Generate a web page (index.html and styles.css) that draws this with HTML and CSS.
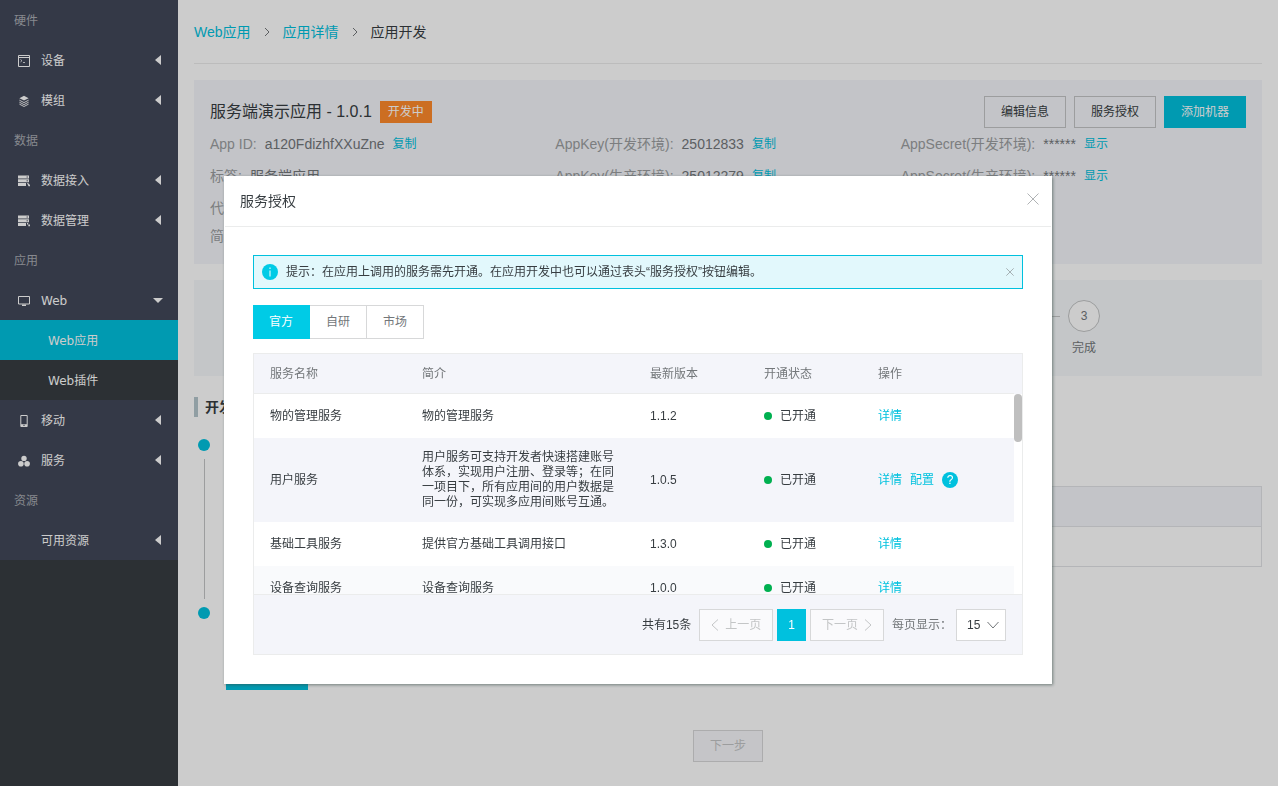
FILE: index.html
```html
<!DOCTYPE html>
<html lang="zh-CN">
<head>
    <meta charset="UTF-8">
    <meta name="viewport" content="width=device-width, initial-scale=1.0">
    <title>服务授权</title>
    <link rel="stylesheet" href="styles.css">
</head>
<body>
    <div class="layout">
        <!-- 左侧菜单 -->
        <nav class="sidebar">
            <div class="menu">
                <h2 class="menu-group">硬件</h2>
                <a href="#" class="menu-item">
                    <svg class="menu-icon" viewBox="0 0 12 12"><path d="M.5.5h11v11H.5zM.5 2.500h11" fill="none" stroke="#fff"/><path d="M2.500 4.500l1.500 1.200-1.500 1.200M5 7.500h2" fill="none" stroke="#fff" stroke-width=".8"/></svg>
                    <span>设备</span><i class="arrow"></i>
                </a>
                <a href="#" class="menu-item">
                    <svg class="menu-icon" viewBox="0 0 12 12"><path d="M6 .8l4.600 2.400L6 5.600 1.400 3.200z" fill="#fff"/><path d="M1.400 5.200L6 7.600l4.600-2.400M1.400 7.200L6 9.600l4.600-2.400M1.400 9.100L6 11.500l4.600-2.400" fill="none" stroke="#fff" stroke-width=".9"/></svg>
                    <span>模组</span><i class="arrow"></i>
                </a>
                <h2 class="menu-group">数据</h2>
                <a href="#" class="menu-item">
                    <svg class="menu-icon" viewBox="0 0 12 12"><path d="M0 .5h11v3H0zM0 4.300h11v3H0zM0 8h8v3H0zM9 8h1l2 2v1.300h-1.500z" fill="#fff"/><path d="M8.500 2h1.500M8.500 5.800h1.500" stroke="#424859" stroke-width=".8"/></svg>
                    <span>数据接入</span><i class="arrow"></i>
                </a>
                <a href="#" class="menu-item">
                    <svg class="menu-icon" viewBox="0 0 12 12"><path d="M0 .5h11v3H0zM0 4.300h11v3H0zM0 8h8v3H0zM9 8h1.200v1.500H9zM10.300 9.500H12v1.800h-1.700z" fill="#fff"/><path d="M8.500 2h1.500M8.500 5.800h1.500" stroke="#424859" stroke-width=".8"/></svg>
                    <span>数据管理</span><i class="arrow"></i>
                </a>
                <h2 class="menu-group">应用</h2>
                <a href="#" class="menu-item">
                    <svg class="menu-icon" viewBox="0 0 12 12"><path d="M.5 1.500h11v7.500H.5z" fill="none" stroke="#fff"/><path d="M4 9.500h4v1.500H4z" fill="#fff"/></svg>
                    <span>Web</span><i class="arrow arrow-down"></i>
                </a>
                <a href="#" class="menu-sub active">Web应用</a>
                <a href="#" class="menu-sub">Web插件</a>
                <a href="#" class="menu-item">
                    <svg class="menu-icon" viewBox="0 0 12 12"><path d="M2.800.5h6.400v11H2.800z" fill="none" stroke="#fff"/><path d="M3 9.200h6v2.300H3z" fill="#fff"/><path d="M5.300 10.300h1.400" stroke="#424859"/></svg>
                    <span>移动</span><i class="arrow"></i>
                </a>
                <a href="#" class="menu-item">
                    <svg class="menu-icon" viewBox="0 0 12 12" fill="#fff"><circle cx="6" cy="3.400" r="2.700"/><circle cx="2.900" cy="8.700" r="2.800"/><circle cx="9.100" cy="8.700" r="2.800"/></svg>
                    <span>服务</span><i class="arrow"></i>
                </a>
                <h2 class="menu-group">资源</h2>
                <a href="#" class="menu-item">
                    <i class="menu-icon"></i>
                    <span>可用资源</span><i class="arrow"></i>
                </a>
            </div>
        </nav>

        <main class="main">
            <div class="breadcrumb">
                <a href="#">Web应用</a>
                <svg class="crumb-sep" viewBox="0 0 6 10"><path d="M1 1l4 4-4 4"/></svg>
                <a href="#">应用详情</a>
                <svg class="crumb-sep" viewBox="0 0 6 10"><path d="M1 1l4 4-4 4"/></svg>
                <span>应用开发</span>
            </div>

            <!-- 应用信息 -->
            <section class="info">
                <div class="info-head">
                    <h1>服务端演示应用 - 1.0.1</h1>
                    <span class="tag">开发中</span>
                    <div class="info-actions">
                        <button type="button" class="btn">编辑信息</button>
                        <button type="button" class="btn">服务授权</button>
                        <button type="button" class="btn btn-primary">添加机器</button>
                    </div>
                </div>
                <div class="info-grid">
                    <div class="info-cell"><span class="label">App ID:</span><span>a120FdizhfXXuZne</span><a href="#">复制</a></div>
                    <div class="info-cell"><span class="label">AppKey(开发环境):</span><span>25012833</span><a href="#">复制</a></div>
                    <div class="info-cell"><span class="label">AppSecret(开发环境):</span><span>******</span><a href="#">显示</a></div>
                    <div class="info-cell"><span class="label">标签:</span><span>服务端应用</span></div>
                    <div class="info-cell"><span class="label">AppKey(生产环境):</span><span>25012279</span><a href="#">复制</a></div>
                    <div class="info-cell"><span class="label">AppSecret(生产环境):</span><span>******</span><a href="#">显示</a></div>
                </div>
                <div class="info-cell"><span class="label">代</span></div>
                <div class="info-cell info-last"><span class="label">简</span></div>
            </section>

            <!-- 步骤条 -->
            <ol class="steps">
                <li class="step"><span class="step-num">1</span></li>
                <li class="step"><span class="step-num">2</span></li>
                <li class="step"><span class="step-num">3</span><span>完成</span></li>
            </ol>

            <h2 class="section-title">开发</h2>
            <ul class="timeline">
                <li class="timeline-item">
                    <div class="marker"><i class="dot"></i><i class="line"></i></div>
                    <div class="panel"><div class="panel-head"></div><div class="panel-body"></div></div>
                </li>
                <li class="timeline-item">
                    <div class="marker"><i class="dot"></i></div>
                    <button type="button" class="btn btn-primary timeline-btn" aria-label="添加"></button>
                </li>
            </ul>
            <div class="next"><button type="button" class="btn btn-disabled" disabled>下一步</button></div>
        </main>
    </div>

    <!-- 服务授权弹窗 -->
    <div class="mask">
        <div class="dialog" role="dialog" aria-labelledby="dialog-title">
            <div class="dialog-head">
                <h2 id="dialog-title">服务授权</h2>
                <button type="button" class="close" aria-label="关闭"><svg viewBox="0 0 12 12"><path d="M.5.5l11 11M11.500.5l-11 11"/></svg></button>
            </div>
            <div class="dialog-body">
                <div class="notice">
                    <svg class="notice-icon" viewBox="0 0 16 16"><circle cx="8" cy="8" r="8" fill="#00cbe6"/><path d="M8 6.500v6M8 3.500v1.500" stroke="#fff"/></svg>
                    <p>提示：在应用上调用的服务需先开通。在应用开发中也可以通过表头“服务授权”按钮编辑。</p>
                    <button type="button" class="close close-small" aria-label="关闭提示"><svg viewBox="0 0 12 12"><path d="M.5.5l11 11M11.500.5l-11 11"/></svg></button>
                </div>

                <div class="tabs">
                    <button type="button" class="tab selected">官方</button>
                    <button type="button" class="tab">自研</button>
                    <button type="button" class="tab">市场</button>
                </div>

                <div class="table-box">
                    <div class="table-scroll">
                        <table class="services">
                            <thead>
                                <tr>
                                    <th class="col-name">服务名称</th>
                                    <th class="col-desc">简介</th>
                                    <th class="col-version">最新版本</th>
                                    <th class="col-status">开通状态</th>
                                    <th class="col-action">操作</th>
                                </tr>
                            </thead>
                            <tbody>
                                <tr>
                                    <td>物的管理服务</td>
                                    <td>物的管理服务</td>
                                    <td>1.1.2</td>
                                    <td><span class="status">已开通</span></td>
                                    <td><a href="#">详情</a></td>
                                </tr>
                                <tr class="hover">
                                    <td>用户服务</td>
                                    <td>用户服务可支持开发者快速搭建账号体系，实现用户注册、登录等；在同一项目下，所有应用间的用户数据是同一份，可实现多应用间账号互通。</td>
                                    <td>1.0.5</td>
                                    <td><span class="status">已开通</span></td>
                                    <td>
                                        <div class="actions">
                                            <a href="#">详情</a>
                                            <a href="#">配置</a>
                                            <button type="button" class="help" aria-label="帮助">?</button>
                                        </div>
                                    </td>
                                </tr>
                                <tr>
                                    <td>基础工具服务</td>
                                    <td>提供官方基础工具调用接口</td>
                                    <td>1.3.0</td>
                                    <td><span class="status">已开通</span></td>
                                    <td><a href="#">详情</a></td>
                                </tr>
                                <tr class="even">
                                    <td>设备查询服务</td>
                                    <td>设备查询服务</td>
                                    <td>1.0.0</td>
                                    <td><span class="status">已开通</span></td>
                                    <td><a href="#">详情</a></td>
                                </tr>
                            </tbody>
                        </table>
                        <div class="track"><div class="thumb"></div></div>
                    </div>
                    <div class="pager">
                        <span>共有15条</span>
                        <div class="pages">
                            <button type="button" class="page-btn" disabled><svg viewBox="0 0 8 12"><path d="M7 .5L1 6l6 5.500"/></svg>上一页</button>
                            <button type="button" class="page-btn current">1</button>
                            <button type="button" class="page-btn" disabled>下一页<svg viewBox="0 0 8 12"><path d="M1 .5L7 6l-6 5.500"/></svg></button>
                        </div>
                        <div class="page-size">
                            <label for="page-size">每页显示：</label>
                            <div class="size-box">
                                <select id="page-size"><option>15</option></select>
                                <svg class="size-arrow" viewBox="0 0 12 8"><path d="M.5 1L6 7l5.500-6"/></svg>
                            </div>
                        </div>
                    </div>
                </div>
            </div>
        </div>
    </div>
</body>
</html>
```
FILE: styles.css
```css
* {
    box-sizing: border-box;
}

body {
    margin: 0;
    font-family: "Liberation Sans", "Noto Sans CJK SC", sans-serif;
    font-size: 12px;
    line-height: 16px;
    color: #373d41;
    background: #fff;
}

h1, h2, p, ul, ol {
    margin: 0;
    padding: 0;
    font-weight: 400;
    list-style: none;
}

a {
    color: #00c1de;
    text-decoration: none;
}

button, select {
    font: inherit;
    cursor: pointer;
}

.layout {
    display: flex;
    min-height: 100vh;
}

/* 左侧菜单 */
.sidebar {
    flex: 0 0 178px;
    background: #373d41;
    font-family: "DejaVu Sans", "Noto Sans CJK SC", sans-serif;
}

.menu {
    background: #424859;
}

.menu-group {
    height: 40px;
    padding-left: 14px;
    font-size: 12px;
    line-height: 42px;
    color: #a9acb3;
}

.menu-item {
    display: flex;
    align-items: center;
    gap: 11px;
    height: 40px;
    padding: 2px 17px 0 18px;
    color: #fff;
}

.menu-icon {
    width: 12px;
    height: 12px;
}

.arrow {
    margin-bottom: 2px;
    margin-left: auto;
    border: 5px solid transparent;
    border-left: 0;
    border-right: 6px solid #fff;
}

.arrow-down {
    border: 5px solid transparent;
    border-top: 5px solid #fff;
    border-bottom: 0;
    margin-right: -2px;
}

.menu-sub {
    display: block;
    height: 40px;
    padding-left: 48px;
    line-height: 42px;
    color: #fff;
    background: #373d41;
}

.menu-sub.active {
    background: #00c1de;
}

.main {
    flex: 1;
    min-width: 0;
    padding: 0 16px;
}

.breadcrumb {
    display: flex;
    align-items: center;
    height: 64px;
    border-bottom: 1px solid #ebecec;
    font-size: 14px;
}

.crumb-sep {
    width: 6px;
    height: 10px;
    margin: 0 13px;
    fill: none;
    stroke: #73777a;
}

/* 按钮 */
.btn {
    height: 32px;
    padding: 0 16px;
    border: 1px solid #c3c5c6;
    color: #373d41;
    background: transparent;
}

.btn-primary {
    border-color: #00c1de;
    color: #fff;
    background: #00c1de;
}

.btn-disabled {
    border-color: #d7d8d9;
    color: #c3c5c6;
    background: #f7f7fa;
}

/* 应用信息 */
.info {
    margin-top: 16px;
    padding: 16px;
    background: #f4f5fa;
}

.info-head {
    display: flex;
    align-items: center;
    gap: 8px;
}

.info-head h1 {
    font-size: 16px;
}

.tag {
    padding: 3px 8px;
    color: #fff;
    background: #ff8a2b;
}

.info-actions {
    display: flex;
    gap: 8px;
    margin-left: auto;
}

.info-grid {
    display: grid;
    grid-template-columns: repeat(3, 1fr);
}

.info-cell {
    display: flex;
    align-items: center;
    gap: 8px;
    height: 32px;
    font-size: 14px;
    color: #73777a;
}

.info-cell .label {
    color: #9b9ea0;
}

.info-cell a {
    font-size: 12px;
}

.info-last {
    height: 24px;
}

/* 步骤条 */
.steps {
    display: flex;
    height: 96px;
    margin-top: 16px;
    padding-top: 20px;
    background: #f5f8fa;
}

.step {
    display: grid;
    flex: 1;
    grid-template-columns: 1fr 32px 1fr;
    column-gap: 8px;
    row-gap: 8px;
    align-content: start;
    justify-items: center;
    align-items: center;
    color: #73777a;
}

.step::before,
.step::after {
    content: "";
    width: 100%;
    height: 1px;
    background: #c3c5c6;
}

.step::before {
    grid-area: 1 / 1;
}

.step::after {
    grid-area: 1 / 3;
}

.step:first-child::before,
.step:last-child::after {
    visibility: hidden;
}

.step span {
    grid-column: 2;
    white-space: nowrap;
}

.step .step-num {
    grid-row: 1;
    width: 32px;
    border: 1px solid #c3c5c6;
    border-radius: 50%;
    background: #fff;
    line-height: 30px;
    text-align: center;
}

.section-title {
    margin: 21px 0;
    padding-left: 7px;
    border-left: 4px solid #b5c6cc;
    font-size: 14px;
    font-weight: 700;
    line-height: 20px;
}

/* 时间轴 */
.timeline-item {
    display: flex;
    gap: 16px;
    padding-left: 4px;
}

.marker {
    display: flex;
    flex-direction: column;
    align-items: center;
    gap: 8px;
    width: 12px;
    padding-top: 1px;
}

.dot {
    flex: none;
    width: 12px;
    height: 12px;
    border-radius: 50%;
    background: #00c1de;
}

.line {
    width: 1px;
    height: 140px;
    background: #c3c5c6;
}

.timeline-item:first-child {
    height: 168px;
}

.panel {
    flex: 1;
    align-self: flex-start;
    margin-top: 48px;
    border: 1px solid #e1e3e6;
}

.panel-head {
    height: 40px;
    border-bottom: 1px solid #e1e3e6;
    background: #f4f5fa;
}

.panel-body {
    height: 39px;
}

.timeline-btn {
    width: 82px;
    margin-top: 52px;
}

.next {
    margin-top: 40px;
    text-align: center;
}

/* 弹窗 */
.mask {
    position: fixed;
    inset: 0;
    padding: 176px 226px 0 224px;
    background: rgba(0, 0, 0, 0.2);
}

.dialog {
    background: #fff;
    box-shadow: 1px 1px 3px rgba(55, 75, 70, 0.6);
}

.dialog-head {
    display: flex;
    align-items: center;
    justify-content: space-between;
    height: 51px;
    margin: 0 1px;
    padding: 0 12px 0 15px;
    border-bottom: 1px solid #ebecec;
}

.dialog-head h2 {
    font-size: 14px;
}

.dialog-head .close {
    margin-bottom: 5px;
}

.close {
    padding: 0;
    border: 0;
    background: none;
    line-height: 0;
}

.close svg {
    width: 12px;
    height: 12px;
    fill: none;
    stroke: #b0b3b5;
}

.close-small svg {
    width: 8px;
    height: 8px;
    stroke: #888c8f;
}

.dialog-body {
    padding: 28px 29px 29px;
}

.notice {
    display: flex;
    align-items: center;
    gap: 8px;
    height: 34px;
    padding: 0 8px;
    border: 1px solid #00c1de;
    background: #e2f8fc;
}

.notice-icon {
    width: 16px;
    height: 16px;
}

.notice .close {
    margin-left: auto;
}

.tabs {
    display: flex;
    margin: 16px 0 14px;
}

.tab {
    height: 34px;
    padding: 0 16px;
    border: 1px solid #d7d8d9;
    border-left: 0;
    color: #73777a;
    background: #fff;
}

.tab.selected {
    border-color: #00cbe6;
    color: #fff;
    background: #00cbe6;
}

.table-box {
    border: 1px solid #ebecec;
}

/* 表格 */
.table-scroll {
    display: flex;
    align-items: flex-start;
    height: 240px;
    overflow: hidden;
}

.services {
    flex: 1;
    border-spacing: 0;
    table-layout: fixed;
    line-height: 15px;
}

.services th,
.services td {
    padding: 12px 16px;
    text-align: left;
}

.services th {
    height: 40px;
    padding: 13px 16px 11px;
    border-bottom: 1px solid #ebecec;
    font-weight: 400;
    color: #73777a;
    background: #f4f5fa;
}

.services td {
    height: 44px;
}

.col-name,
.col-action {
    width: 20%;
}

.col-desc {
    width: 30%;
}

.col-version,
.col-status {
    width: 15%;
}

.hover {
    background: #f4f5fa;
}

.even {
    background: #f9fafc;
}

.status,
.actions {
    display: flex;
    align-items: center;
    gap: 8px;
}

.status::before {
    content: "";
    width: 8px;
    height: 8px;
    border-radius: 50%;
    background: #00b050;
}

.help {
    width: 16px;
    height: 16px;
    padding: 0;
    border: 0;
    border-radius: 50%;
    color: #fff;
    background: #00c1de;
    line-height: 16px;
}

.track {
    width: 8px;
    padding-top: 40px;
    background: linear-gradient(#f4f5fa 40px, #fff 40px);
}

.thumb {
    height: 48px;
    border-radius: 4px;
    background: #bfbfbf;
}

/* 分页 */
.pager {
    display: flex;
    align-items: center;
    justify-content: flex-end;
    gap: 8px;
    height: 60px;
    padding: 0 16px;
    border-top: 1px solid #ebecec;
    background: #f4f5fa;
}

.pages {
    display: flex;
    gap: 4px;
}

.page-btn {
    display: flex;
    align-items: center;
    gap: 6px;
    height: 32px;
    padding: 0 11px;
    border: 1px solid #d7d8d9;
    color: #c3c5c6;
    background: #fafafc;
}

.page-btn svg {
    width: 8px;
    height: 12px;
    fill: none;
    stroke: #c3c5c6;
}

.page-btn.current {
    padding: 0 10px;
    border-color: #00c1de;
    color: #fff;
    background: #00c1de;
}

.page-size {
    display: flex;
    align-items: center;
    gap: 4px;
    color: #73777a;
}

.size-box {
    position: relative;
}

.size-box select {
    width: 50px;
    height: 32px;
    padding: 0 10px;
    border: 1px solid #d7d8d9;
    border-radius: 0;
    appearance: none;
    color: #373d41;
    background: #fff;
}

.size-arrow {
    position: absolute;
    top: 12px;
    right: 7px;
    width: 12px;
    height: 8px;
    fill: none;
    stroke: #73777a;
    pointer-events: none;
}
```
